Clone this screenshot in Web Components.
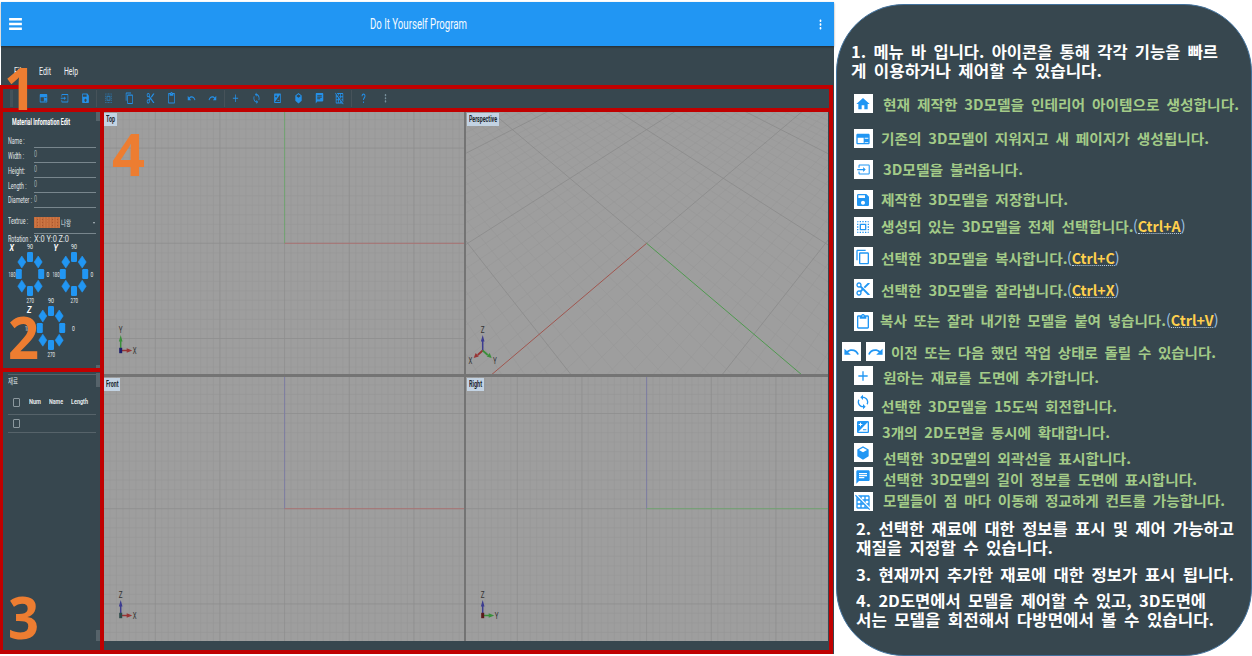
<!DOCTYPE html>
<html lang="ko">
<head>
<meta charset="utf-8">
<title>Do It Yourself Program</title>
<style>
html,body{margin:0;padding:0;background:#fff;overflow:hidden}
body{width:1252px;height:656px;font-family:Roboto,"Noto Sans CJK KR",sans-serif}
</style>
</head>
<body>
<diy-page></diy-page>
<script>
const define=(n,c)=>customElements.define(n,c);
class Base extends HTMLElement{
  connectedCallback(){ if(this.shadowRoot) return; this.attachShadow({mode:'open'}).innerHTML=this.render(); this.ready&&this.ready(); }
  a(n,d=''){return this.hasAttribute(n)?this.getAttribute(n):d}
}

/* Single line of text condensed or expanded to an exact width. */
define('fit-text',class extends Base{
  render(){return `<style>:host{display:block;flex:none;width:${this.a('w')}px;white-space:nowrap}span{display:inline-block;transform-origin:0 50%}</style><span><slot></slot></span>`}
  ready(){const s=this.shadowRoot.querySelector('span');const w=s.offsetWidth?s.getBoundingClientRect().width:0;if(w)s.style.transform=`scaleX(${(+this.a('w')/w).toFixed(4)})`}
});

const ICONS={
menu:'M3 18h18v-2.4H3zM3 13.2h18v-2.4H3zM3 6v2.4h18V6z',
home:'M10 20v-6h4v6h5v-8h3L12 3 2 12h3v8z',
page:'M20 4H4c-1.100 0-2 .9-2 2v12c0 1.100.9 2 2 2h16c1.100 0 2-.9 2-2V6c0-1.100-.9-2-2-2zM4 18v-8h9v8zm16 0h-5.500v-1.200H20zm0-6.500h-5.500V10H20z',
input:'M20 4H6c-1.100 0-2 .9-2 2v3h1.700V5.700h14.600v12.600H5.700V15H4v3c0 1.100.9 2 2 2h14c1.100 0 2-.9 2-2V6c0-1.100-.9-2-2-2zM11.500 16l4-4-4-4v3H2v2h9.500z',
save:'M17 3H5c-1.110 0-2 .9-2 2v14c0 1.100.89 2 2 2h14c1.100 0 2-.9 2-2V7l-4-4zm-5 16c-1.660 0-3-1.340-3-3s1.340-3 3-3 3 1.340 3 3-1.340 3-3 3zm3-10H5V5h10v4z',
select:'M3 5h2V3c-1.100 0-2 .9-2 2zm0 8h2v-2H3v2zm4 8h2v-2H7v2zM3 9h2V7H3v2zm10-6h-2v2h2V3zm6 0v2h2c0-1.100-.9-2-2-2zM5 21v-2H3c0 1.100.9 2 2 2zm-2-4h2v-2H3v2zM9 3H7v2h2V3zm2 18h2v-2h-2v2zm8-8h2v-2h-2v2zm0 8c1.100 0 2-.9 2-2h-2v2zm0-12h2V7h-2v2zm0 8h2v-2h-2v2zm-4 4h2v-2h-2v2zm0-16h2V3h-2v2zM7 17h10V7H7v10zm2-8h6v6H9V9z',
copy:'M16 1H4c-1.100 0-2 .9-2 2v14h2V3h12V1zm3 4H8c-1.100 0-2 .9-2 2v14c0 1.100.9 2 2 2h11c1.100 0 2-.9 2-2V7c0-1.100-.9-2-2-2zm0 16H8V7h11v14z',
cut:'M9.640 7.640c.23-.5.36-1.050.36-1.640 0-2.210-1.790-4-4-4S2 3.790 2 6s1.790 4 4 4c.59 0 1.140-.13 1.640-.36L10 12l-2.360 2.360C7.140 14.130 6.590 14 6 14c-2.210 0-4 1.790-4 4s1.790 4 4 4 4-1.790 4-4c0-.59-.13-1.140-.36-1.640L12 14l7 7h3v-1L9.640 7.640zM6 8c-1.100 0-2-.89-2-2s.9-2 2-2 2 .89 2 2-.9 2-2 2zm0 12c-1.100 0-2-.89-2-2s.9-2 2-2 2 .89 2 2-.9 2-2 2zM19 3l-6 6 2 2 7-7V3z',
paste:'M19 2h-4.180C14.400.84 13.300 0 12 0c-1.300 0-2.400.84-2.820 2H5c-1.100 0-2 .9-2 2v16c0 1.100.9 2 2 2h14c1.100 0 2-.9 2-2V4c0-1.100-.9-2-2-2zm-7 0c.55 0 1 .45 1 1s-.45 1-1 1-1-.45-1-1 .45-1 1-1zm7 18H5V4h2v3h10V4h2v16z',
undo:'M12.500 8c-2.650 0-5.050.99-6.900 2.600L2 7v9h9l-3.620-3.620c1.390-1.160 3.160-1.880 5.120-1.880 3.540 0 6.550 2.310 7.600 5.500l2.370-.78C21.080 11.030 17.150 8 12.500 8z',
redo:'M18.400 10.600C16.550 8.990 14.150 8 11.500 8c-4.650 0-8.580 3.030-9.960 7.220L3.900 16c1.050-3.190 4.050-5.500 7.600-5.500 1.950 0 3.730.72 5.120 1.880L13 16h9V7l-3.600 3.600z',
add:'M19 13h-6v6h-2v-6H5v-2h6V5h2v6h6v2z',
sync:'M12 4V1L8 5l4 4V6c3.310 0 6 2.690 6 6 0 1.010-.25 1.970-.7 2.800l1.460 1.460C19.540 15.030 20 13.570 20 12c0-4.420-3.580-8-8-8zm0 14c-3.310 0-6-2.690-6-6 0-1.010.25-1.970.7-2.800L5.240 7.740C4.460 8.970 4 10.430 4 12c0 4.420 3.580 8 8 8v3l4-4-4-4v3z',
zoom:'M19 3H5c-1.100 0-2 .9-2 2v14c0 1.100.9 2 2 2h14c1.100 0 2-.9 2-2V5c0-1.100-.9-2-2-2zM5.500 7.500h2v-2H9v2h2V9H9v2H7.500V9h-2V7.500zM19 19H5L19 5v14zm-2-2v-1.500h-5V17h5z',
cube:'M12 2l8.500 4.700v10.200L12 22l-8.500-5.100V6.700zm0 2.200L6 7.600l6 3.400 6-3.400z',
chat:'M20 2H4c-1.100 0-2 .9-2 2v18l4-4h14c1.100 0 2-.9 2-2V4c0-1.100-.9-2-2-2zM6 9h12v2H6V9zm8 5H6v-2h8v2zm4-6H6V6h12v2z',
grid:'M8 4v1.450l2 2V4h4v4h-3.450l2 2H14v1.450l2 2V10h4v4h-3.450l2 2H20v1.450l2 2V4c0-1.100-.9-2-2-2H4.550l2 2H8zm8 0h4v4h-4V4zM1.270 1.270L0 2.550l2 2V20c0 1.100.9 2 2 2h15.460l2 2 1.270-1.270L1.270 1.270zM10 12.550L11.450 14H10v-1.450zm-6-6L5.450 8H4V6.550zM8 20H4v-4h4v4zm0-6H4v-4h3.450l.55.55V14zm6 6h-4v-4h3.450l.55.54V20zm2 0v-1.460L17.460 20H16z',
help:'M11 18h2.400v3H11zM12 3C9 3 7 5 7 8h2.400c0-1.700 1-2.800 2.600-2.800s2.700 1 2.700 2.600c0 2.700-3.900 3-3.900 7.700h2.400c0-3.300 4-4 4-7.900C17.200 4.800 15 3 12 3z',
more:'M12 8c1.100 0 2-.9 2-2s-.9-2-2-2-2 .9-2 2 .9 2 2 2zm0 2c-1.100 0-2 .9-2 2s.9 2 2 2 2-.9 2-2-.9-2-2-2zm0 6c-1.100 0-2 .9-2 2s.9 2 2 2 2-.9 2-2-.9-2-2-2z'};
define('ui-icon',class extends Base{
  render(){return `<style>:host{display:block;flex:none;width:${this.a('w',16)}px;height:${this.a('h',16)}px;color:${this.a('color','#2196f3')}}svg{display:block;width:100%;height:100%}</style>
  <svg viewBox="0 0 24 24" preserveAspectRatio="none"><path fill="currentColor" fill-rule="${/cube|page/.test(this.a('name'))?'evenodd':'nonzero'}" d="${ICONS[this.a('name')]}"/></svg>`}
});

define('app-header',class extends Base{
  render(){return `<style>:host{display:flex;box-sizing:border-box;height:44px;background:#2196f3;align-items:center;justify-content:space-between;padding:0 8px 0 6px;color:#f4faff;font-size:15px;box-shadow:0 1px 2px #0006;position:relative}</style>
  <ui-icon name="menu" w="17" h="24" color="#fff"></ui-icon><fit-text w="97" style="margin-left:-3px"><slot></slot></fit-text><ui-icon name="more" w="11" h="15" color="#fff"></ui-icon>`}
});

define('menu-bar',class extends Base{
  render(){return `<style>:host{display:flex;box-sizing:border-box;height:39px;padding:18px 0 0 13px;gap:14px;color:#f0f3f4;font-size:10.500px;line-height:16px}</style>
  <fit-text w="11">File</fit-text><fit-text w="12">Edit</fit-text><fit-text w="14" style="margin-left:-1px">Help</fit-text>`}
});

define('tool-bar',class extends Base{
  render(){
    const items=[['home',22],['page',43.500],['input',64.500],['save',85],['|',96.5],['select',108],['copy',129],['cut',150],['paste',171],['undo',191.500],['redo',212.500],['|',224],['add',235.500],['sync',256],['zoom',277],['cube',298],['chat',319],['grid',339.500],['|',351],['help',363],['more',385.500]];
    let x=13,h='';
    for(const [n,c] of items){const w=n=='|'?1:9;const l=c-w/2;h+=n=='|'?`<i style="margin-left:${l-x}px"></i>`:`<ui-icon name="${n}" w="9" h="12.500" style="margin-left:${l-x}px" color="${n=='more'?'#78909c':n=='select'?'#2b7fc0':'#2490e8'}"></ui-icon>`;x=l+w}
    return `<style>:host{display:flex;align-items:center;box-sizing:border-box;height:27px;margin-left:-1px;border:4px solid #c00000;border-left-width:3px;padding-left:7px}
    b{width:3px;height:17px;background:radial-gradient(circle,#4b5a62 .5px,transparent .8px) 0 0/1.500px 2px}i{width:1px;height:17px;background:#465259}</style><b></b>${h}`}
});

define('field-row',class extends Base{
  render(){return `<style>:host{display:flex;height:${this.a('h',14.85)}px;align-items:center;font-size:8.300px;color:#e3e7e9;line-height:12px}
  .l{width:26px}.v{width:62px;box-sizing:border-box;align-self:stretch;border-bottom:1px solid #78868d;color:#a3aeb3;line-height:13px}</style>
  <div class="l"><fit-text w="${this.a('w')}">${this.a('label')}</fit-text></div><div class="v"><slot></slot></div>`}
});

define('rotation-dial',class extends Base{
  render(){
    let s='';
    for(const [x,y] of [[22,14],[33.200,31],[22,48],[10.800,31]]) s+=`<rect x="${x-3}" y="${y-5}" width="6" height="10" rx="1.200"/>`;
    for(const [x,y] of [[30.200,19],[13.800,19],[13.800,43.200],[30.200,43.200]]) s+=`<path d="M${x-4} ${y}L${x} ${y-6}L${x+4} ${y}L${x} ${y+6}z" stroke="#2196f3" stroke-width=".6" stroke-linejoin="round"/>`;
    const z=this.a('axis')=='Z';
    return `<style>:host{display:block;width:44px;height:62px;flex:none}svg{display:block;overflow:visible}text{font:6.800px Roboto,sans-serif;fill:#e8ecee}.a{font:italic bold 9px Roboto,sans-serif;fill:#fff}</style>
    <svg width="44" height="62"><g fill="#2196f3">${s}</g>
    <text class="a" x="${z?-2:1.500}" y="${z?16:7.500}" textLength="4.500" lengthAdjust="spacingAndGlyphs">${this.a('axis')}</text>
    <text x="19" y="5.500" textLength="6" lengthAdjust="spacingAndGlyphs">90</text>
    <text x="${z?-4:.5}" y="33.500" textLength="7" lengthAdjust="spacingAndGlyphs">180</text>
    <text x="${z?43:38.500}" y="33.500" textLength="2.800" lengthAdjust="spacingAndGlyphs">0</text>
    <text x="18.500" y="60" textLength="7.500" lengthAdjust="spacingAndGlyphs">270</text></svg>`}
});

define('scroll-strip',class extends Base{
  render(){return `<style>:host{display:flex;flex-direction:column;justify-content:space-between;width:4px;flex:none}i{background:#56636a}</style><i style="height:${this.a('top')}px"></i><i style="height:${this.a('end')}px"></i>`}
});

define('material-panel',class extends Base{
  render(){return `<style>:host{display:flex;box-sizing:border-box;height:260px;border-bottom:4px solid #c00000}
  .m{flex:1;padding:4px 0 0 5px}.t{font:bold 8.300px/12px Roboto,sans-serif;color:#fff;padding-left:4px;margin-bottom:5.600px}
  .tex{display:flex;align-items:center;gap:1px;height:100%}.sw{display:block;width:26px;height:11px;margin-top:5px;background:radial-gradient(circle,#d07a46 .7px,transparent 1px) 0 0/3px 2.500px,radial-gradient(circle,#a9552e .7px,transparent 1px) 1px 1px/5px 3px,#c46c3c}
  .k{font:8px/10px "Noto Sans CJK KR",sans-serif;color:#dfe5e8;margin-top:5px}.c{margin:5px 1px 0 auto;border:1.800px solid transparent;border-top:2.500px solid #b5c0c5;border-bottom:0}
  .rot{display:flex;gap:3px;font-size:8.300px;line-height:11px;color:#e3e7e9;white-space:pre}.d{display:flex;margin:-2px 0 0 -.5px}.z{display:flex;margin:-7.500px 0 0 21px}</style>
  <div class="m"><div class="t"><fit-text w="58">Material Infomation Edit</fit-text></div>
  <field-row label="Name :" w="16.500"></field-row>
  <field-row label="Width :" w="16"><fit-text w="3">0</fit-text></field-row>
  <field-row label="Height:" w="17"><fit-text w="3">0</fit-text></field-row>
  <field-row label="Length :" w="18.500"><fit-text w="3">0</fit-text></field-row>
  <field-row label="Diameter :" w="24"><fit-text w="3">0</fit-text></field-row>
  <field-row label="Textrue :" w="20" h="26"><div class="tex"><span class="sw"></span><fit-text class="k" w="10">나왕</fit-text><span class="c"></span></div></field-row>
  <div class="rot"><fit-text w="23">Rotation :</fit-text><fit-text w="35">X:0  Y:0  Z:0</fit-text></div>
  <div class="d"><rotation-dial axis="X"></rotation-dial><rotation-dial axis="Y"></rotation-dial></div>
  <div class="z"><rotation-dial axis="Z"></rotation-dial></div></div>
  <scroll-strip top="9" end="3"></scroll-strip>`}
});

define('parts-panel',class extends Base{
  render(){return `<style>:host{display:flex;box-sizing:border-box;flex:1}.m{flex:1;padding:2px 0 0 5px}.s{height:268px}
  .t{font:8px/11px "Noto Sans CJK KR",sans-serif;color:#dfe5e8;border-top:1px solid #56636a}
  .h,.r{display:flex;align-items:center;border-bottom:1px solid #56636a;font:bold 8px/12px Roboto,sans-serif;color:#e3e8ea;padding-left:5px;width:83px}
  .h{height:24px;padding-top:4px}.r{height:16.500px}i{width:4.500px;height:7px;border:1px solid #8b989e;border-radius:1px;margin-right:9px}</style>
  <div class="m"><div class="t"><fit-text w="10">재료</fit-text></div>
  <div class="h"><i></i><fit-text w="12" style="margin-right:8px">Num</fit-text><fit-text w="14" style="margin-right:8.500px">Name</fit-text><fit-text w="17">Length</fit-text></div>
  <div class="r"><i></i></div></div><scroll-strip class="s" top="14" end="11" style="margin-top:1px"></scroll-strip>`}
});

/* CAD viewport; drawing coordinates are those of the whole workspace. */
const C={r:'#983434',g:'#3a8f3a',b:'#3c3c90'};
define('view-port',class extends Base{
  render(){
    const [x,y,w,h]=this.a('box').split(' ').map(Number),k=this.a('kind');
    const line=(a,b,c,d,s,sw=1)=>`<path d="M${a.toFixed(2)} ${b.toFixed(2)}L${c.toFixed(2)} ${d.toFixed(2)}" stroke="${s}" stroke-width="${sw}"/>`;
    let g='',major='';
    const add=(m,...p)=>{m?major+=line(...p,k=='persp'?'#8a8a8a':'#8e8e8e',.8):g+=line(...p,'#969696',.55)};
    let ox,oy,ax='';
    if(k=='persp'){
      const P=(u,v)=>{const s=u+v,q=1-s/6;return [646.600+89.450*(v-u)/q,243.300+75.800*s/q]};
      for(let i=-50;i<=50;i++){const u=i/10,m=i%10==0;
        if(i==0){add(1,...P(0,0),...P(0,-4));add(1,...P(0,0),...P(-4,0));continue}
        add(m,...P(u,-3.500-u),...P(u,2.500-u));add(m,...P(-3.500-u,u),...P(2.500-u,u));}
      ax=line(...P(0,0),...P(2,0),'#a0564f')+line(...P(0,0),...P(0,2),'#4f994f');
    }else{
      ox=k=='right'?646.600:284.600;oy=k=='top'?243.300:508.700;
      for(let i=-60;i<=60;i++){const px=ox+i*6.467,py=oy+i*9.520,m=i%10==0;
        if(px>x&&px<x+w)add(m,px,y,px,y+h);if(py>y&&py<y+h)add(m,x,py,x+w,py);}
      ax=line(ox,y,ox,oy,k=='top'?'#6ea56e':'#7c7ca4',.9)+line(ox,oy,x+w,oy,k=='right'?'#6ea56e':'#ab7070',.9);
    }
    const gx=k=='persp'||k=='right'?482.700:120.700,gy=k=='top'||k=='persp'?350.500:615.500;
    const up=k=='top'?'g':'b',T=(t,a,b)=>`<text x="${a}" y="${b}" textLength="3.800" lengthAdjust="spacingAndGlyphs">${t}</text>`;
    let gz=line(gx,gy,gx,gy-11,C[up],1.500)+`<path fill="${C[up]}" d="M${gx-1.800} ${gy-9}L${gx} ${gy-15.500}L${gx+1.800} ${gy-9}z"/>`+T(k=='top'?'Y':'Z',gx-1.900,gy-17.500);
    if(k=='persp'){
      gz+=line(gx,gy,gx-5,gy+4.500,C.r,1.800)+line(gx,gy,gx+5,gy+4.500,C.g,1.800)
      +`<path fill="${C.r}" d="M${gx-9} ${gy+7.500}l2-5 3 3.500z"/><path fill="${C.g}" d="M${gx+9} ${gy+7.500}l-2-5-3 3.500z"/>`+T('X',gx-14.200,gy+13.500)+T('Y',gx+10.200,gy+13.500);
    }else{
      const c=k=='right'?C.g:C.r;
      gz+=line(gx,gy,gx+8,gy,c,1.500)+`<path fill="${c}" d="M${gx+6} ${gy-2.200}L${gx+11.500} ${gy}L${gx+6} ${gy+2.200}z"/>`+T(k=='right'?'Y':'X',gx+12.100,gy+3);
      gz+=`<rect x="${gx-1.500}" y="${gy-2.700}" width="3" height="5.400" fill="${k=='top'?'#1d1d6b':k=='right'?'#5a1a1a':'#2c4a4a'}"/>`;
    }
    return `<style>:host{display:block;position:relative;overflow:hidden;background:#9e9e9e}svg{display:block}
    text{font:8.500px Roboto,sans-serif;fill:#333}
    .tag{position:absolute;left:${x>400?1:0}px;top:1px;background:#c3d3e3;color:#1c262c;font:bold 8.500px/13px Roboto,sans-serif;padding:0 1.500px 0 2px}</style>
    <svg width="${w}" height="${h}" viewBox="${x} ${y} ${w} ${h}" fill="none">${g}${major}${ax}<g>${gz}</g></svg><div class="tag"><fit-text w="${this.a('lw')}">${this.a('label')}</fit-text></div>`}
});

define('view-grid',class extends Base{
  render(){return `<style>:host{display:block;box-sizing:border-box;flex:1;border-right:4px solid #c00000;border-bottom:4px solid #c00000}
  div{display:grid;grid-template-columns:360px 362px;grid-template-rows:262px 264px;gap:3px 2px;width:724px;background:#747474}</style>
  <div><view-port kind="top" label="Top" lw="9" box="104 112 360 262"></view-port><view-port kind="persp" label="Perspective" lw="28" box="466 112 362 262"></view-port>
  <view-port kind="front" label="Front" lw="12.500" box="104 377 360 264"></view-port><view-port kind="right" label="Right" lw="13" box="466 377 362 264"></view-port></div>`}
});

define('callout-number',class extends Base{
  render(){return `<style>:host{position:absolute;z-index:5;font:bold 59px/60px "Noto Sans",sans-serif;color:#ed7d31}</style><fit-text w="${this.a('w')}"><slot></slot></fit-text>`}
});

define('diy-app',class extends Base{
  render(){return `<style>:host{display:block;position:relative;box-sizing:border-box;width:835px;height:656px;padding:2px 1px 0 1px;flex:none}
  .app{background:#37474f;width:833px;height:652px;display:flex;flex-direction:column}.w{display:flex;flex:1;margin:0 1px 0 -1px}
  tool-bar{margin-right:1px}.side{width:104px;box-sizing:border-box;display:flex;flex-direction:column;border:solid #c00000;border-width:0 4px 4px 3px}</style>
  <div class="app"><app-header>Do It Yourself Program</app-header><menu-bar></menu-bar><tool-bar></tool-bar>
  <div class="w"><div class="side"><material-panel></material-panel><parts-panel></parts-panel></div><view-grid></view-grid></div></div>
  <callout-number w="32" style="left:4px;top:57px">1</callout-number><callout-number w="31" style="left:8px;top:306px">2</callout-number>
  <callout-number w="31" style="left:8px;top:586px">3</callout-number><callout-number w="33" style="left:112px;top:123px">4</callout-number>`}
});

/* One legend line: tiles with icons, then the explanation and an optional shortcut. */
define('guide-item',class extends Base{
  render(){
    const ic=this.a('icons').split(' '),k=this.a('key');
    return `<style>:host{display:flex;height:${this.a('h')}px;padding-left:${ic.length>1?5:17}px;color:#a3cb88;font:bold 13.800px/20px "Noto Sans CJK KR",sans-serif;word-spacing:2.500px}
    .i{width:19px;height:19px;background:#fff;display:flex;align-items:center;justify-content:center;margin-right:5px;flex:none}
    .t{margin:${this.a('dy')}px 0 0 ${this.a('dx')}px;display:flex;height:20px}.k{color:#9dc3e6;font-weight:400;font-size:14.500px}
    .k b{font-weight:700;color:#ffd04d;display:inline-block;line-height:14px;border-bottom:1px dotted #bcd3ea}</style>
    ${ic.map(n=>`<div class="i"><ui-icon name="${n}" w="${n=='undo'||n=='redo'?17:n=='input'?15:16}" h="${n=='input'?15:16}"></ui-icon></div>`).join('')}
    <div class="t"><fit-text w="${this.a('w')}"><slot></slot></fit-text>${k?`<fit-text class="k" w="52.500">(<b>${k}</b>)</fit-text>`:''}</div>`}
});

define('guide-note',class extends Base{
  render(){return `<style>:host{display:block;height:${this.a('h')}px;padding-left:${this.a('x')}px;color:#fff;font:bold 15.500px/19px "Noto Sans CJK KR",sans-serif;word-spacing:2.500px}</style><slot></slot>`}
});

define('guide-panel',class extends Base{
  render(){return `<style>:host{display:block;box-sizing:border-box;width:416px;height:652px;margin:4px 0 0 .5px;background:#37474f;border:1px solid #41719c;border-radius:68px;padding-top:37px;flex:none;overflow:hidden}</style>
  <guide-note x="14" h="52"><fit-text w="367">1. 메뉴 바 입니다. 아이콘을 통해 각각 기능을 빠르</fit-text><fit-text w="251">게 이용하거나 제어할 수 있습니다.</fit-text></guide-note>
  <guide-item icons="home" h="35" dx="5" dy="0" w="356">현재 제작한 3D모델을 인테리어 아이템으로 생성합니다.</guide-item>
  <guide-item icons="page" h="31" dx="3.500" dy="-1" w="328">기존의 3D모델이 지워지고 새 페이지가 생성됩니다.</guide-item>
  <guide-item icons="input" h="30" dx="5" dy="-1" w="140">3D모델을 불러옵니다.</guide-item>
  <guide-item icons="save" h="27" dx="3" dy="-1" w="187">제작한 3D모델을 저장합니다.</guide-item>
  <guide-item icons="select" h="30" dx="3" dy="-1" w="252.500" key="Ctrl+A">생성되 있는 3D모델을 전체 선택합니다.</guide-item>
  <guide-item icons="copy" h="32" dx="3" dy="1" w="186.500" key="Ctrl+C">선택한 3D모델을 복사합니다.</guide-item>
  <guide-item icons="cut" h="33" dx="3" dy="1" w="186.500" key="Ctrl+X">선택한 3D모델을 잘라냅니다.</guide-item>
  <guide-item icons="paste" h="30" dx="2" dy="-2" w="286" key="Ctrl+V">복사 또는 잘라 내기한 모델을 붙여 넣습니다.</guide-item>
  <guide-item icons="undo redo" h="24" dx="1" dy="0" w="325">이전 또는 다음 했던 작업 상태로 돌릴 수 있습니다.</guide-item>
  <guide-item icons="add" h="26" dx="5" dy="1" w="216">원하는 재료를 도면에 추가합니다.</guide-item>
  <guide-item icons="sync" h="25" dx="3" dy="4" w="236">선택한 3D모델을 15도씩 회전합니다.</guide-item>
  <guide-item icons="zoom" h="26" dx="4" dy="5" w="228">3개의 2D도면을 동시에 확대합니다.</guide-item>
  <guide-item icons="cube" h="24" dx="5" dy="5" w="248">선택한 3D모델의 외곽선을 표시합니다.</guide-item>
  <guide-item icons="chat" h="25" dx="5" dy="2" w="314">선택한 3D모델의 길이 정보를 도면에 표시합니다.</guide-item>
  <guide-item icons="grid" h="27" dx="5" dy="-2" w="342">모델들이 점 마다 이동해 정교하게 컨트롤 가능합니다.</guide-item>
  <guide-note x="19" h="46"><fit-text w="378">2. 선택한 재료에 대한 정보를 표시 및 제어 가능하고</fit-text><fit-text w="197">재질을 지정할 수 있습니다.</fit-text></guide-note>
  <guide-note x="19" h="26"><fit-text w="378">3. 현재까지 추가한 재료에 대한 정보가 표시 됩니다.</fit-text></guide-note>
  <guide-note x="19" h="40"><fit-text w="350">4. 2D도면에서 모델을 제어할 수 있고, 3D도면에</fit-text><fit-text w="358">서는 모델을 회전해서 다방면에서 볼 수 있습니다.</fit-text></guide-note>`}
});

define('diy-page',class extends Base{
  render(){return `<style>:host{display:flex;width:1252px;height:656px;overflow:hidden}</style><diy-app></diy-app><guide-panel></guide-panel>`}
});
</script>
</body>
</html>
